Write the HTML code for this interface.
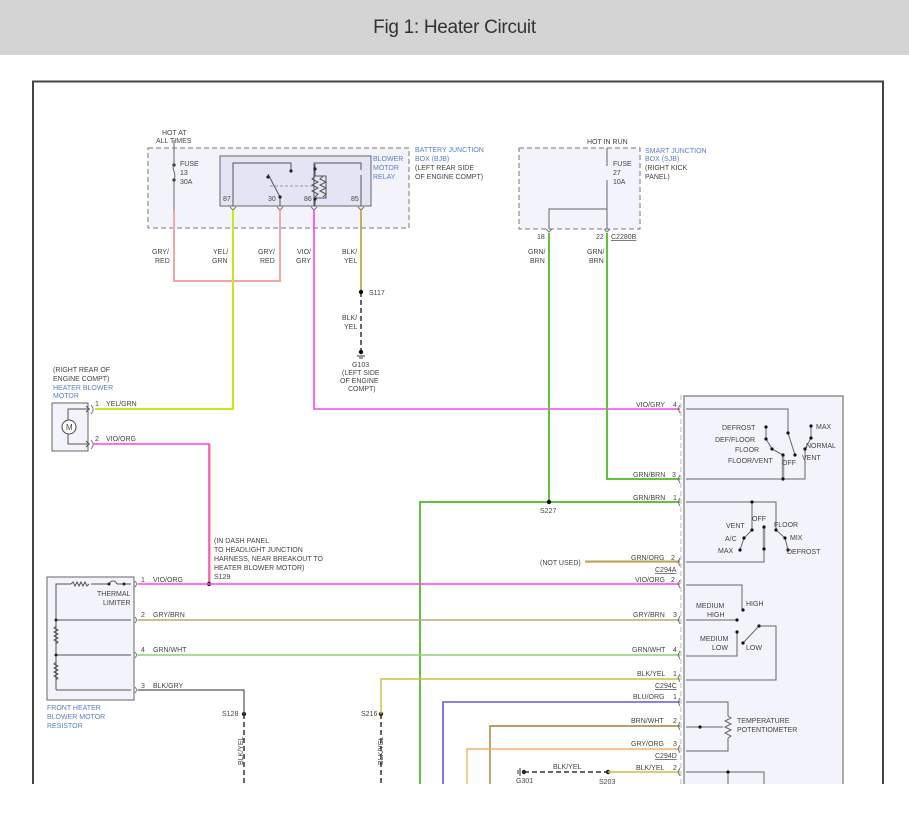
<!DOCTYPE html>
<html><head><meta charset="utf-8"><style>
html,body{margin:0;padding:0;background:#fff;width:909px;height:824px;overflow:hidden}
.hd{position:absolute;left:0;top:0;width:909px;height:55px;background:#d4d4d4;text-align:center;font:19px/55px "Liberation Sans",sans-serif;color:#333;letter-spacing:-0.3px}
svg{position:absolute;left:0;top:0}
text{font-family:"Liberation Sans",sans-serif;font-size:7px;fill:#444}
.b{fill:#5a7fc8}
</style></head><body>
<div class="hd">Fig 1: Heater Circuit</div>
<svg width="909" height="824" viewBox="0 0 909 824">
<defs><clipPath id="c"><rect x="0" y="0" width="909" height="784"/></clipPath></defs>
<g clip-path="url(#c)">
<!-- frame -->
<path d="M33 830V81.5H883V830" fill="none" stroke="#444" stroke-width="2"/>
<!-- BJB -->
<rect x="148" y="148" width="261" height="80" fill="#f3f3fc" stroke="#777" stroke-dasharray="5,3"/>
<rect x="220" y="156" width="151" height="50" fill="#e4e4f4" stroke="#666"/>
<path d="M233 206V163H291V171M314 206V163H361V170M361 175V206M280 206V197L268 174M315 164V176M315 198V206M315 176H326V198H315" fill="none" stroke="#555"/>
<path d="M270 186H314" stroke="#999" stroke-dasharray="3,2"/>
<path d="M315 176l-3 3 6 3-6 3 6 3-6 3 6 3-3 3M323 176l-3 3 6 3-6 3 6 3-6 3 6 3-3 3" fill="none" stroke="#555"/>
<g fill="#222"><circle cx="291" cy="171" r="1.6"/><circle cx="268" cy="177" r="1.6"/><circle cx="280" cy="197" r="1.6"/><circle cx="315" cy="169" r="1.6"/><circle cx="315" cy="199" r="1.6"/><circle cx="174" cy="165" r="1.6"/><circle cx="174" cy="180" r="1.6"/><circle cx="607" cy="166" r="1.6"/><circle cx="607" cy="180" r="1.6"/><circle cx="607" cy="209" r="1.6"/></g>
<path d="M174 140V165M174 180V281M174 165c-3 4 3 8 0 15M607 148V166M607 166c-3 4 3 8 0 14M607 180V229M607 209H549V229" fill="none" stroke="#666"/>
<g fill="none" stroke="#777"><path d="M230 207l3 3 3-3M277 207l3 3 3-3M311 207l3 3 3-3M358 207l3 3 3-3M546 229l3 3 3-3M604 229l3 3 3-3"/></g>
<text x="162" y="135">HOT AT</text><text x="156" y="143">ALL TIMES</text>
<text x="180" y="166">FUSE</text><text x="180" y="175">13</text><text x="180" y="184">30A</text>
<text x="223" y="201">87</text><text x="268" y="201">30</text><text x="304" y="201">86</text><text x="351" y="201">85</text>
<text class="b" x="373" y="161">BLOWER</text><text class="b" x="373" y="170">MOTOR</text><text class="b" x="373" y="179">RELAY</text>
<text class="b" x="415" y="152">BATTERY JUNCTION</text><text class="b" x="415" y="161">BOX (BJB)</text><text x="415" y="170">(LEFT REAR SIDE</text><text x="415" y="179">OF ENGINE COMPT)</text>
<!-- SJB -->
<rect x="519" y="148" width="121" height="81" fill="#f3f3fc" stroke="#777" stroke-dasharray="5,3"/>
<path d="M607 148V166M607 180V229M607 209H549V229" fill="none" stroke="#666"/>
<text x="587" y="144">HOT IN RUN</text>
<text x="613" y="166">FUSE</text><text x="613" y="175">27</text><text x="613" y="184">10A</text>
<text class="b" x="645" y="153">SMART JUNCTION</text><text class="b" x="645" y="161">BOX (SJB)</text><text x="645" y="170">(RIGHT KICK</text><text x="645" y="179">PANEL)</text>
<text x="537" y="239">18</text><text x="596" y="239">22</text><text x="611" y="239" text-decoration="underline">C2280B</text>
<!-- wire labels top -->
<text x="152" y="254">GRY/</text><text x="155" y="263">RED</text>
<text x="213" y="254">YEL/</text><text x="212" y="263">GRN</text>
<text x="258" y="254">GRY/</text><text x="260" y="263">RED</text>
<text x="297" y="254">VIO/</text><text x="296" y="263">GRY</text>
<text x="342" y="254">BLK/</text><text x="344" y="263">YEL</text>
<text x="528" y="254">GRN/</text><text x="530" y="263">BRN</text>
<text x="587" y="254">GRN/</text><text x="589" y="263">BRN</text>
<!-- wires -->
<path d="M174 210V281H280V210" fill="none" stroke="#f0a8a8" stroke-width="2"/>
<path d="M233 210V409H95" fill="none" stroke="#c8e81e" stroke-width="2"/>
<path d="M314 210V409H680" fill="none" stroke="#ff40ee" stroke-width="1.6"/>
<path d="M361 210V292" stroke="#a8a830" stroke-width="1.6"/>
<path d="M361 292V352" stroke="#333" stroke-width="1.5" stroke-dasharray="5,3"/>
<circle cx="361" cy="292" r="2.2" fill="#111"/><circle cx="361" cy="352" r="2.2" fill="#111"/>
<path d="M357 356h8M359 358h4" stroke="#333"/>
<text x="369" y="295">S117</text><text x="342" y="320">BLK/</text><text x="344" y="329">YEL</text>
<text x="352" y="367">G103</text><text x="342" y="375">(LEFT SIDE</text><text x="340" y="383">OF ENGINE</text><text x="348" y="391">COMPT)</text>
<path d="M549 233V502M607 233V479H680M420 830V502H680" fill="none" stroke="#66c040" stroke-width="2"/>
<circle cx="549" cy="502" r="2.2" fill="#111"/><text x="540" y="513">S227</text>
<!-- motor -->
<text x="53" y="372">(RIGHT REAR OF</text><text x="53" y="381">ENGINE COMPT)</text><text class="b" x="53" y="390">HEATER BLOWER</text><text class="b" x="53" y="398">MOTOR</text>
<rect x="52" y="403" width="36" height="48" fill="#f3f3fc" stroke="#666"/>
<path d="M68 420V409H90M68 434V444H90M86 406l3 3-3 3M86 441l3 3-3 3" fill="none" stroke="#555"/>
<circle cx="69" cy="427" r="7" fill="#fff" stroke="#444"/><text x="66" y="430" style="font-size:8px">M</text>
<path d="M91 405l2 3v3l-2 3M91 440l2 3v3l-2 3" fill="none" stroke="#777"/>
<text x="95" y="406">1</text><text x="106" y="406">YEL/GRN</text>
<text x="95" y="441">2</text><text x="106" y="441">VIO/ORG</text>
<path d="M93 444H209V584" fill="none" stroke="#ff40ee" stroke-width="1.6"/>
<path d="M210 444V584" stroke="#e8903a" stroke-width="1"/>
<text x="214" y="543">(IN DASH PANEL</text><text x="214" y="552">TO HEADLIGHT JUNCTION</text><text x="214" y="561">HARNESS, NEAR BREAKOUT TO</text><text x="214" y="570">HEATER BLOWER MOTOR)</text><text x="214" y="579">S129</text>
<!-- resistor -->
<rect x="47" y="577" width="87" height="123" fill="#f3f3fc" stroke="#666"/>
<path d="M56 690V584H71M91 584H109M117 584H131M56 620H131M56 655H131M56 690H131" fill="none" stroke="#555"/>
<path d="M71 584l2-2 2 4 2-4 2 4 2-4 2 4 2-4 2 4 2-2M109 584c2-4 6-4 8 0M56 626l-2 2 4 2-4 2 4 2-4 2 4 2-4 2 4 2-2 2M56 662l-2 2 4 2-4 2 4 2-4 2 4 2-4 2 4 2-2 2" fill="none" stroke="#555"/>
<g fill="#222"><circle cx="109" cy="584" r="1.5"/><circle cx="124" cy="584" r="1.5"/><circle cx="56" cy="620" r="1.5"/><circle cx="56" cy="655" r="1.5"/><circle cx="209" cy="584" r="2.2"/><circle cx="244" cy="714" r="2.2"/><circle cx="381" cy="714" r="2.2"/><circle cx="524" cy="772" r="2.2"/><circle cx="608" cy="772" r="2.2"/></g>
<text x="97" y="596">THERMAL</text><text x="103" y="605">LIMITER</text>
<text class="b" x="47" y="710">FRONT HEATER</text><text class="b" x="47" y="719">BLOWER MOTOR</text><text class="b" x="47" y="728">RESISTOR</text>
<g fill="none" stroke="#777"><path d="M135 581l2 3-2 3M135 617l2 3-2 3M135 652l2 3-2 3M135 687l2 3-2 3"/></g>
<text x="141" y="582">1</text><text x="153" y="582">VIO/ORG</text>
<text x="141" y="617">2</text><text x="153" y="617">GRY/BRN</text>
<text x="141" y="652">4</text><text x="153" y="652">GRN/WHT</text>
<text x="141" y="688">3</text><text x="153" y="688">BLK/GRY</text>
<path d="M138 584H680" stroke="#ff40ee" stroke-width="1.6"/>
<path d="M138 620H680" stroke="#b8a878" stroke-width="1.4"/>
<path d="M138 655H680" stroke="#90d070" stroke-width="1.4"/>
<path d="M138 690H244V714" fill="none" stroke="#555" stroke-width="1.2"/>
<path d="M244 714V790M381 714V790" stroke="#333" stroke-width="1.5" stroke-dasharray="5,3"/>
<text x="222" y="716">S128</text><text x="361" y="716">S216</text>
<text transform="translate(243,765) rotate(-90)">BLK/YEL</text><text transform="translate(383,765) rotate(-90)">BLK/YEL</text>
<path d="M381 714V679H680" fill="none" stroke="#c8c040" stroke-width="1.4"/>
<path d="M443 790V702H680" fill="none" stroke="#7050e0" stroke-width="1.6"/>
<path d="M490 790V726H680" fill="none" stroke="#a08030" stroke-width="1.4"/>
<path d="M467 790V749H680" fill="none" stroke="#f0b070" stroke-width="1.4"/>
<path d="M524 772H608" stroke="#333" stroke-width="1.5" stroke-dasharray="5,3"/>
<path d="M608 772H680" stroke="#c8c040" stroke-width="1.4"/>
<path d="M520 768v8M518 770v4" stroke="#333"/>
<text x="516" y="783">G301</text><text x="599" y="784">S203</text><text x="553" y="769">BLK/YEL</text>
<path d="M585 562H680" stroke="#e8a060" stroke-width="1.4"/><path d="M585 561H680" stroke="#66a030" stroke-width="0.8"/>
<text x="540" y="565">(NOT USED)</text>
<!-- control box -->
<rect x="684" y="396" width="159" height="440" fill="#f3f3fc" stroke="#888" stroke-width="1.4"/>
<path d="M681 395V790" stroke="#bbb" stroke-dasharray="5,3"/>
<g fill="none" stroke="#777"><path d="M680 405l-2 4 2 4M680 475l-2 4 2 4M680 498l-2 4 2 4M680 558l-2 4 2 4M680 580l-2 4 2 4M680 616l-2 4 2 4M680 651l-2 4 2 4M680 674l-2 4 2 4M680 698l-2 4 2 4M680 722l-2 4 2 4M680 745l-2 4 2 4M680 768l-2 4 2 4"/></g>
<text x="636" y="407">VIO/GRY</text><text x="673" y="407">4</text>
<text x="633" y="477">GRN/BRN</text><text x="672" y="477">3</text>
<text x="633" y="500">GRN/BRN</text><text x="673" y="500">1</text>
<text x="631" y="560">GRN/ORG</text><text x="671" y="560">2</text>
<text x="655" y="572" text-decoration="underline">C294A</text>
<text x="635" y="582">VIO/ORG</text><text x="671" y="582">2</text>
<text x="633" y="617">GRY/BRN</text><text x="673" y="617">3</text>
<text x="632" y="652">GRN/WHT</text><text x="673" y="652">4</text>
<text x="637" y="676">BLK/YEL</text><text x="673" y="676">1</text>
<text x="655" y="688" text-decoration="underline">C294C</text>
<text x="633" y="699">BLU/ORG</text><text x="673" y="699">1</text>
<text x="631" y="723">BRN/WHT</text><text x="673" y="723">2</text>
<text x="631" y="746">GRY/ORG</text><text x="673" y="746">3</text>
<text x="655" y="758" text-decoration="underline">C294D</text>
<text x="636" y="770">BLK/YEL</text><text x="673" y="770">2</text>
<g fill="none" stroke="#666" stroke-width="1">
<path d="M686 409H788V433M795 455L788 433M766 427V439L772 449L783 455M686 479H805V449L811 438V426M686 502H776V530L785 538L788 550M752 502V530L744 538L740 550M686 562H764V549M686 585H742V610M686 620H737M737 632V656H686M743 643L759 626H776V680H686M686 702H728V716M728 738V751H686M686 727H723M686 772H764V790M728 772V790"/>
<path d="M728 716l3 2-6 3 6 3-6 3 6 3-6 3 6 3-3 2" />
</g>
<path d="M783 455V479M764 527V549" stroke="#999" stroke-width="2.5"/>
<g fill="#111"><circle cx="766" cy="427" r="1.6"/><circle cx="766" cy="439" r="1.6"/><circle cx="772" cy="449" r="1.6"/><circle cx="783" cy="455" r="1.6"/><circle cx="788" cy="433" r="1.6"/><circle cx="795" cy="455" r="1.6"/><circle cx="811" cy="426" r="1.6"/><circle cx="811" cy="438" r="1.6"/><circle cx="805" cy="449" r="1.6"/><circle cx="783" cy="479" r="1.6"/><circle cx="752" cy="502" r="1.6"/><circle cx="752" cy="530" r="1.6"/><circle cx="744" cy="538" r="1.6"/><circle cx="740" cy="550" r="1.6"/><circle cx="776" cy="530" r="1.6"/><circle cx="785" cy="538" r="1.6"/><circle cx="788" cy="550" r="1.6"/><circle cx="764" cy="527" r="1.6"/><circle cx="764" cy="549" r="1.6"/><circle cx="743" cy="610" r="1.6"/><circle cx="737" cy="620" r="1.6"/><circle cx="737" cy="632" r="1.6"/><circle cx="743" cy="643" r="1.6"/><circle cx="759" cy="626" r="1.6"/><circle cx="700" cy="727" r="1.6"/><circle cx="728" cy="772" r="1.6"/></g>
<text x="722" y="430">DEFROST</text><text x="715" y="442">DEF/FLOOR</text><text x="735" y="452">FLOOR</text><text x="728" y="463">FLOOR/VENT</text><text x="782" y="465">OFF</text>
<text x="816" y="429">MAX</text><text x="806" y="448">NORMAL</text><text x="802" y="460">VENT</text>
<text x="726" y="528">VENT</text><text x="725" y="541">A/C</text><text x="718" y="553">MAX</text><text x="752" y="521">OFF</text><text x="774" y="527">FLOOR</text><text x="790" y="540">MIX</text><text x="787" y="554">DEFROST</text>
<text x="746" y="606">HIGH</text><text x="696" y="608">MEDIUM</text><text x="707" y="617">HIGH</text><text x="700" y="641">MEDIUM</text><text x="712" y="650">LOW</text><text x="746" y="650">LOW</text>
<text x="737" y="723">TEMPERATURE</text><text x="737" y="732">POTENTIOMETER</text>
</g>
</svg>
</body></html>
